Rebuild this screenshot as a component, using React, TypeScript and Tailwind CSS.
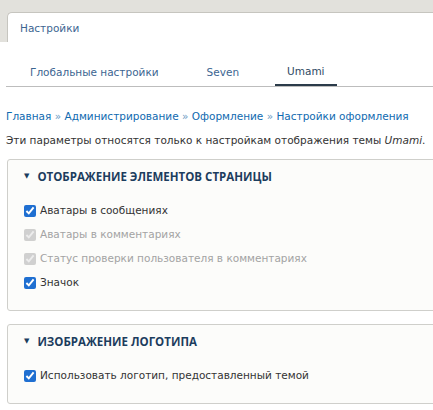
import React from "react";

const body = { fontFamily: '"DejaVu Sans", Verdana, sans-serif' };
const heading = { fontFamily: '"Open Sans", "DejaVu Sans", sans-serif' };

type Item = { label: string; checked: boolean; disabled?: boolean };

const display: Item[] = [
  { label: "Аватары в сообщениях", checked: true },
  { label: "Аватары в комментариях", checked: true, disabled: true },
  { label: "Статус проверки пользователя в комментариях", checked: true, disabled: true },
  { label: "Значок", checked: true },
];

const logo: Item[] = [{ label: "Использовать логотип, предоставленный темой", checked: true }];

function CheckRow({ item }: { item: Item }) {
  return (
    <label className={`flex items-center h-6 gap-1 ${item.disabled ? "text-[#a3a3a3]" : "text-[#333]"}`}>
      <input
        type="checkbox"
        defaultChecked={item.checked}
        disabled={item.disabled}
        className="w-3 h-3 m-0 accent-[#1f6fd1]"
      />
      <span className="text-[10.5px]">{item.label}</span>
    </label>
  );
}

function Fieldset({ title, items, className }: { title: string; items: Item[]; className?: string }) {
  return (
    <div className={`ml-[7px] -mr-2 border border-[#cfcfcb] rounded-[3px] bg-[#fcfcfa] ${className ?? ""}`}>
      <div className="flex items-center h-[34px] pl-4 gap-2 text-[#1c3d5e]">
        <span className="text-[7px]">▼</span>
        <span style={heading} className="text-[11.5px] font-bold uppercase">
          {title}
        </span>
      </div>
      <div className="pl-4 pt-[5px] pb-[15px]">
        {items.map((it) => (
          <CheckRow key={it.label} item={it} />
        ))}
      </div>
    </div>
  );
}

export default function App() {
  return (
    <div style={body} className="w-[433px] h-[410px] overflow-hidden bg-white">
      {/* primary tabs */}
      <div className="bg-[#e2e1dc] pt-3 pl-[7px] flex">
        <div className="flex-1 h-[30px] bg-white border-l border-t border-[#c6c5bf] rounded-tl-[5px] flex items-center pl-3 pt-[2px]">
          <span className="text-[10.5px] text-[#3c6591]">Настройки</span>
        </div>
      </div>

      {/* secondary tabs */}
      <div className="ml-[6px] mt-[18px] border-b border-[#bdbdbd] flex gap-6 pl-3 text-[10.5px] text-[#3c6591]">
        <div className="px-3 h-[26px] flex items-center">Глобальные настройки</div>
        <div className="px-3 h-[26px] flex items-center">Seven</div>
        <div className="px-3 h-[26px] flex items-center text-[#2f4a63] border-b-2 border-[#2b3b4a] -mb-px">
          Umami
        </div>
      </div>

      {/* breadcrumb */}
      <div className="px-[6px] mt-[22px] text-[10.5px] text-[#0f6ab0] whitespace-nowrap">
        Главная <span className="text-[#6c9cc4]">»</span> Администрирование{" "}
        <span className="text-[#6c9cc4]">»</span> Оформление <span className="text-[#6c9cc4]">»</span>{" "}
        Настройки оформления
      </div>
      <div className="px-[6px] mt-[8px] text-[10.5px] text-[#333] whitespace-nowrap">
        Эти параметры относятся только к настройкам отображения темы <em>Umami</em>.
      </div>

      <Fieldset title="Отображение элементов страницы" items={display} className="mt-[10px]" />
      <Fieldset title="Изображение логотипа" items={logo} className="mt-[13px]" />
    </div>
  );
}
